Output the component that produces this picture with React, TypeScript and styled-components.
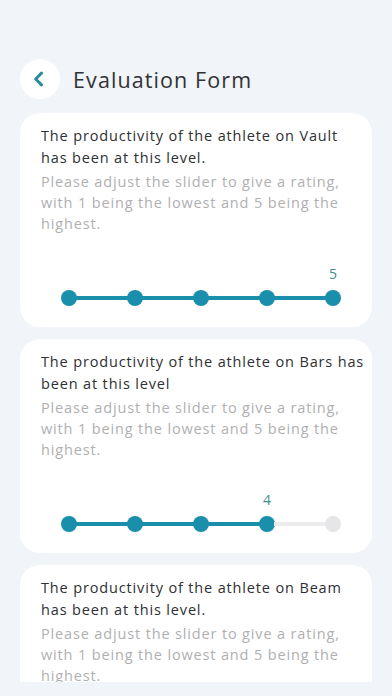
import React from "react";
import styled, { createGlobalStyle } from "styled-components";

const GlobalStyle = createGlobalStyle`
  html, body {
    margin: 0;
    padding: 0;
    background: #f1f4f8;
    font-family: "Open Sans", "Noto Sans", sans-serif;
  }
  * { box-sizing: border-box; }
`;

interface Question {
    title: string;
    value: number;
}

const questions: Question[] = [
    { title: "The productivity of the athlete on Vault has been at this level.", value: 5 },
    { title: "The productivity of the athlete on Bars has been at this level", value: 4 },
    { title: "The productivity of the athlete on Beam has been at this level.", value: 3 },
];

const hint = "Please adjust the slider to give a rating, with 1 being the lowest and 5 being the highest.";

const Rating = ({ value }: { value: number }) => {
    const stops = [1, 2, 3, 4, 5];
    return (
        <SliderGrid>
            {stops.map((s) => (
                <React.Fragment key={s}>
                    <Label style={{ gridColumn: s * 2 - 1 }}>{s === value ? s : ""}</Label>
                    <Dot data-active={s <= value} style={{ gridColumn: s * 2 - 1 }} />
                    {s < 5 && <Segment data-active={s < value} style={{ gridColumn: s * 2 }} />}
                </React.Fragment>
            ))}
        </SliderGrid>
    );
};

export default function App() {
    return (
        <Page>
            <GlobalStyle />
            <Header>
                <BackButton>
                    <svg width="20" height="20" viewBox="0 0 24 24" fill="none" stroke="#2a8b9c" strokeWidth="3.6" strokeLinecap="round" strokeLinejoin="round">
                        <polyline points="15 5 8 12 15 19" />
                    </svg>
                </BackButton>
                <Title>Evaluation Form</Title>
            </Header>
            <Scroll>
                {questions.map((q) => (
                    <Card key={q.title}>
                        <Question>{q.title}</Question>
                        <Hint>{hint}</Hint>
                        <Rating value={q.value} />
                    </Card>
                ))}
            </Scroll>
        </Page>
    );
}

const Page = styled.div`
    height: 696px;
    display: flex;
    flex-direction: column;
    padding: 59px 20px 14px 20px;
`;

const Header = styled.div`
    display: flex;
    align-items: center;
    gap: 13px;
    height: 40px;
    margin-bottom: 14px;
`;

const BackButton = styled.div`
    width: 40px;
    height: 40px;
    border-radius: 50%;
    background: #ffffff;
    display: flex;
    align-items: center;
    justify-content: center;
    padding-right: 3px;
`;

const Title = styled.h1`
    margin: 0;
    font-size: 21.5px;
    font-weight: 400;
    color: #303235;
    letter-spacing: 1.1px;
`;

const Scroll = styled.div`
    flex: 1;
    overflow: hidden;
    display: flex;
    flex-direction: column;
    gap: 12px;
`;

const Card = styled.div`
    flex-shrink: 0;
    background: #ffffff;
    border-radius: 20px;
    padding: 12px 7px 21px 21px;
`;

const Question = styled.div`
    font-size: 14.5px;
    line-height: 22px;
    color: #2e3033;
    letter-spacing: 0.85px;
`;

const Hint = styled.div`
    margin-top: 2px;
    padding-right: 13px;
    font-size: 14.5px;
    line-height: 21px;
    color: #b0b0b2;
    letter-spacing: 0.85px;
`;

const SliderGrid = styled.div`
    display: grid;
    grid-template-columns: 16px 1fr 16px 1fr 16px 1fr 16px 1fr 16px;
    grid-template-rows: 20px 16px;
    row-gap: 6px;
    margin: 30px 24px 0 20px;
    align-items: center;
`;

const Label = styled.div`
    grid-row: 1;
    justify-self: center;
    font-size: 14px;
    color: #3f8e95;
    line-height: 20px;
`;

const Dot = styled.div`
    grid-row: 2;
    width: 16px;
    height: 16px;
    border-radius: 50%;
    background: #e6e6e8;
    &[data-active="true"] {
        background: #1a8fab;
    }
`;

const Segment = styled.div`
    grid-row: 2;
    height: 4px;
    margin: 0 -1px;
    background: #ececee;
    &[data-active="true"] {
        background: #1a8fab;
    }
`;
